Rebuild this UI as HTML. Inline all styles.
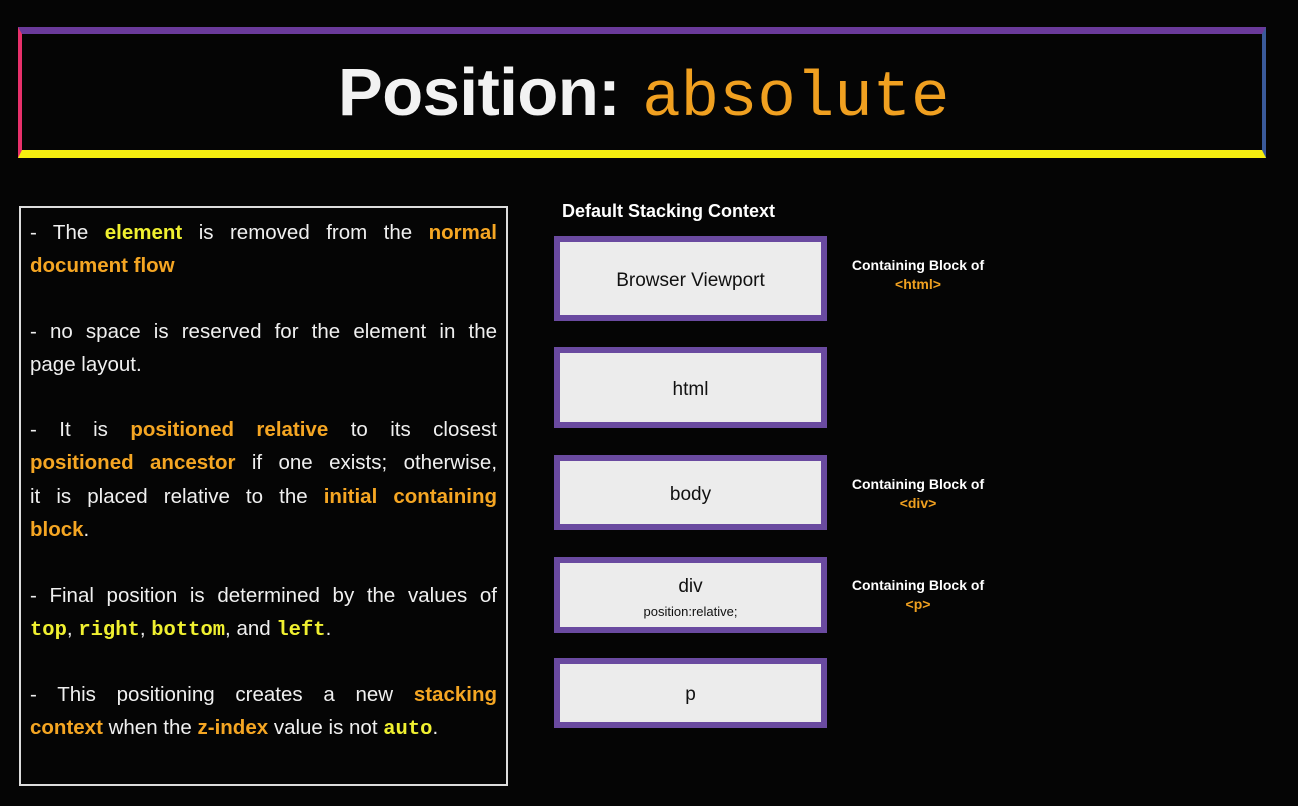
<!DOCTYPE html>
<html><head><meta charset="utf-8"><style>
body{margin:0;width:1298px;height:806px;background:#050505;position:relative;overflow:hidden;font-family:"Liberation Sans",sans-serif;}
.hdr{position:absolute;left:18px;top:27px;width:1240px;height:116px;border-top:7px solid #6a3a9a;border-left:4px solid #e8306a;border-right:4px solid #3a5a9a;border-bottom:8px solid #f5ee10;}
.title{position:absolute;left:338px;top:54px;font-size:67px;color:#f2f2f2;white-space:nowrap;letter-spacing:-0.5px;font-weight:bold;}
.title span{font-family:"Liberation Mono",monospace;color:#f0a020;font-size:64px;letter-spacing:0;margin-left:4px;font-weight:normal;}
.lbox{position:absolute;left:19px;top:206px;width:485px;height:576px;border:2px solid #ddd;}
.p{position:absolute;left:30px;width:467px;font-size:20.5px;line-height:33.3px;color:#f0f0f0;}
.p div{white-space:nowrap;text-align:justify;text-align-last:justify;}
.p div.l{text-align-last:left;}
.y{color:#f0f030;font-weight:bold}.o{color:#f5a623;font-weight:bold}
.c{font-family:"Liberation Mono",monospace;font-weight:bold;color:#f0f030;}
.sh{position:absolute;left:562px;top:201px;color:#fff;font-weight:bold;font-size:18px;}
.b{position:absolute;left:554px;width:261px;background:#ececec;border:6px solid #6a4aa0;color:#111;font-size:19px;text-align:center;display:flex;flex-direction:column;justify-content:center;box-sizing:content-box;padding-top:4px;}
.cb{position:absolute;left:838px;width:160px;text-align:center;color:#fff;font-weight:bold;font-size:14px;line-height:19px;}
.cb span{color:#f0a020;display:block}
</style></head><body>
<div class="hdr"></div>
<div class="title">Position: <span>absolute</span></div>
<div class="lbox"></div>
<div class="p" style="top:216px"><div>- The <span class="y">element</span> is removed from the <span class="o">normal</span></div><div class="l"><span class="o">document flow</span></div></div>
<div class="p" style="top:315px"><div>- no space is reserved for the element in the</div><div class="l">page layout.</div></div>
<div class="p" style="top:413px"><div>- It is <span class="o">positioned relative</span> to its closest</div><div><span class="o">positioned ancestor</span> if one exists; otherwise,</div><div>it is placed relative to the <span class="o">initial containing</span></div><div class="l"><span class="o">block</span>.</div></div>
<div class="p" style="top:579px"><div>- Final position is determined by the values of</div><div class="l"><span class="c">top</span>, <span class="c">right</span>, <span class="c">bottom</span>, and <span class="c">left</span>.</div></div>
<div class="p" style="top:678px"><div>- This positioning creates a new <span class="o">stacking</span></div><div class="l"><span class="o">context</span> when the <span class="o">z-index</span> value is not <span class="c">auto</span>.</div></div>
<div class="sh">Default Stacking Context</div>
<div class="b" style="top:236px;height:69px">Browser Viewport</div>
<div class="b" style="top:347px;height:65px">html</div>
<div class="b" style="top:455px;height:59px">body</div>
<div class="b" style="top:557px;height:60px">div<span style="font-size:13px;margin-top:6px">position:relative;</span></div>
<div class="b" style="top:658px;height:54px">p</div>
<div class="cb" style="top:256px">Containing Block of<span>&lt;html&gt;</span></div>
<div class="cb" style="top:475px">Containing Block of<span>&lt;div&gt;</span></div>
<div class="cb" style="top:576px">Containing Block of<span>&lt;p&gt;</span></div>
</body></html>
